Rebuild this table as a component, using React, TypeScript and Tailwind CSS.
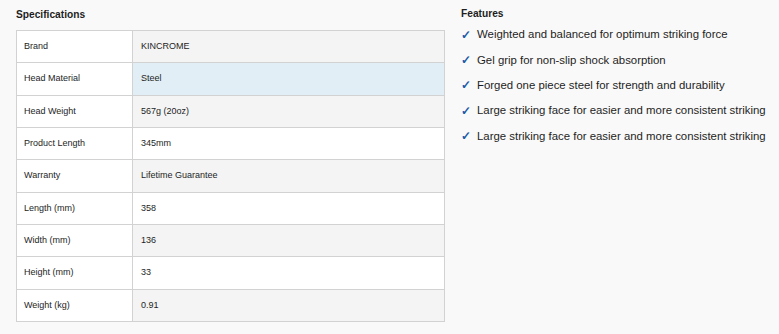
import React from "react";

const rows: [string, string][] = [
  ["Brand", "KINCROME"],
  ["Head Material", "Steel"],
  ["Head Weight", "567g (20oz)"],
  ["Product Length", "345mm"],
  ["Warranty", "Lifetime Guarantee"],
  ["Length (mm)", "358"],
  ["Width (mm)", "136"],
  ["Height (mm)", "33"],
  ["Weight (kg)", "0.91"],
];

const features = [
  "Weighted and balanced for optimum striking force",
  "Gel grip for non-slip shock absorption",
  "Forged one piece steel for strength and durability",
  "Large striking face for easier and more consistent striking",
  "Large striking face for easier and more consistent striking",
];

export default function App() {
  return (
    <div
      className="w-[779px] h-[334px] bg-[#f9f9f9] flex text-[#1e1e1e]"
      style={{ fontFamily: '"Liberation Sans", Arial, sans-serif' }}
    >
      <div className="pl-[16px] pt-[7px] w-[445px] shrink-0">
        <div className="text-[10.2px] font-bold h-[23px] leading-[15px]">Specifications</div>
        <div className="border-t border-l border-r border-[#d2d2d2] w-[429px]">
          {rows.map(([k, v], i) => (
            <div key={k} className="flex h-[32.33px] border-b border-[#d2d2d2] text-[9px] leading-none">
              <div className="w-[116px] bg-white border-r border-[#d2d2d2] flex items-center pl-[7px]">{k}</div>
              <div
                className={
                  "flex-1 flex items-center pl-[8px] " +
                  (i === 1 ? "bg-[#e2eef5]" : i % 2 === 0 ? "bg-[#f4f4f4]" : "bg-white")
                }
              >
                {v}
              </div>
            </div>
          ))}
        </div>
      </div>
      <div className="pl-[16px] pt-[7px] whitespace-nowrap">
        <div className="text-[10.2px] font-bold leading-[14px] h-[15px]">Features</div>
        <div className="flex flex-col">
          {features.map((f, i) => (
            <div key={i} className="flex items-center h-[25.4px] text-[11.4px]">
              <span className="text-[#1a5aa6] w-[16px] text-[12px] font-bold">✓</span>
              <span>{f}</span>
            </div>
          ))}
        </div>
      </div>
    </div>
  );
}
